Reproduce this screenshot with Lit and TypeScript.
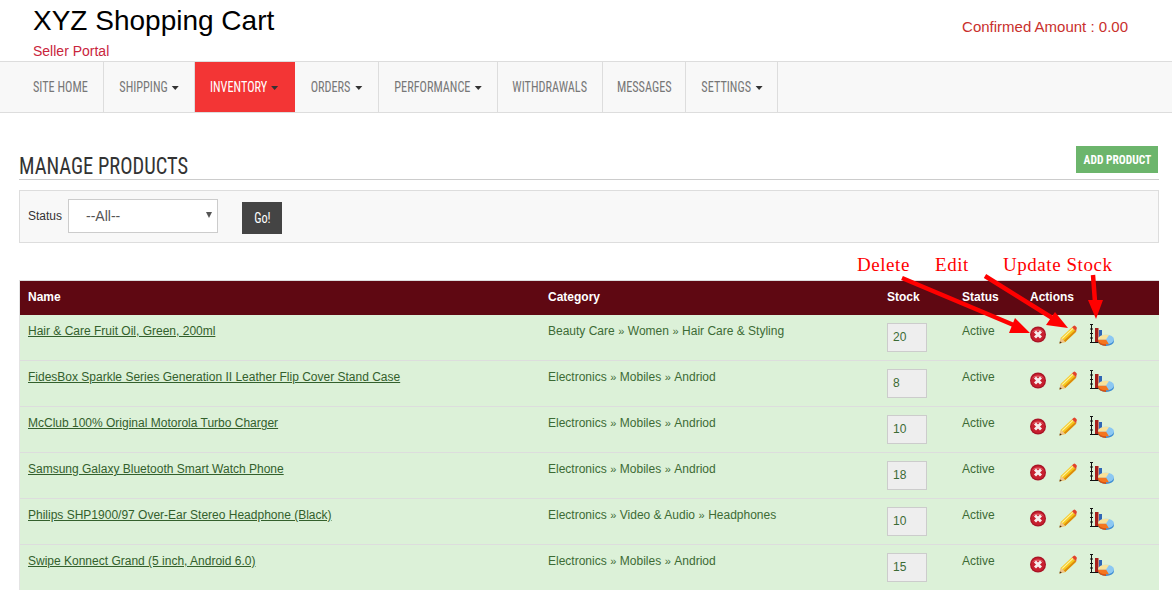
import { LitElement, html, css, svg } from "lit";
import { customElement } from "lit/decorators.js";

const NAV = [
  { t: "SITE HOME", w: 104 }, { t: "SHIPPING", c: 1, w: 91 }, { t: "INVENTORY", c: 1, w: 100, a: 1 },
  { t: "ORDERS", c: 1, w: 84 }, { t: "PERFORMANCE", c: 1, w: 119 }, { t: "WITHDRAWALS", w: 105 },
  { t: "MESSAGES", w: 83 }, { t: "SETTINGS", c: 1, w: 92 },
];
const ROWS = [
  ["Hair & Care Fruit Oil, Green, 200ml", ["Beauty Care", "Women", "Hair Care & Styling"], "20"],
  ["FidesBox Sparkle Series Generation II Leather Flip Cover Stand Case", ["Electronics", "Mobiles", "Andriod"], "8"],
  ["McClub 100% Original Motorola Turbo Charger", ["Electronics", "Mobiles", "Andriod"], "10"],
  ["Samsung Galaxy Bluetooth Smart Watch Phone", ["Electronics", "Mobiles", "Andriod"], "18"],
  ["Philips SHP1900/97 Over-Ear Stereo Headphone (Black)", ["Electronics", "Video & Audio", "Headphones"], "10"],
  ["Swipe Konnect Grand (5 inch, Android 6.0)", ["Electronics", "Mobiles", "Andriod"], "15"],
] as const;

const delIcon = html`<svg class="i-del" width="18" height="18" viewBox="0 0 18 18">
  <circle cx="9" cy="9.500" r="8" fill="#a81426"/><circle cx="9" cy="9.500" r="6.800" fill="#c8202f"/>
  <path d="M3 7.500a6.500 5 0 0 1 12 0a6.500 3 0 0 0-12 0z" fill="#e4626c"/>
  <path d="M6 6.500l6 6M12 6.500l-6 6" stroke="#f6eeee" stroke-width="2.900"/></svg>`;
const editIcon = html`<svg class="i-edit" width="20" height="20" viewBox="0 0 20 20">
  <path d="M1.500 18.500l1.400-5.800L14 2.200l4.200 4.200L7.200 17z" fill="#f7c81e"/>
  <path d="M4.200 13.600L15 3.400" stroke="#fff2a0" stroke-width="1.300"/>
  <path d="M6.400 16.500L17.500 6" stroke="#dc8c0c" stroke-width="1.800"/>
  <path d="M14 2.200l1.500-1.300q1-.7 1.800 0l1.300 1.300q.7 1-.1 1.900L18.200 6.400z" fill="#e2432a"/>
  <path d="M2.900 12.700L1.500 18.500l5.700-1.500z" fill="#eec48e"/><path d="M1.900 16.200L1.500 18.500l2.400-.7z" fill="#4e2c12"/></svg>`;
const chartIcon = html`<svg class="i-chart" width="26" height="23" viewBox="0 0 26 23">
  <path d="M1.500 0v18.500M0 18.500h12M0 .5h3M0 5h3M0 9.500h3M0 14h3" stroke="#111" stroke-width="1" fill="none"/>
  <rect x="5" y="4" width="3.500" height="14" fill="#a8201c"/>
  <rect x="9" y="6" width="3" height="7" fill="#2f66b5"/>
  <ellipse cx="16" cy="17" rx="8" ry="5" fill="#3a8ad2"/>
  <ellipse cx="16" cy="15.500" rx="8" ry="4.800" fill="#8cc8f2"/>
  <path d="M8 15.500v1.500a8 5 0 0 0 8 5v-1.700z" fill="#d9520f"/>
  <path d="M16 15.500H8a8 4.800 0 0 0 8 4.800l3-.1z" fill="#f4761f"/>
  <path d="M16 15.500H8a8 4.800 0 0 1 8-4.800l3 .3z" fill="#f9e29a"/></svg>`;

@customElement("app-root")
export class AppRoot extends LitElement {
  static styles = css`
    :host { display: block; height: 590px; overflow: hidden; position: relative; background: #fff;
      font-family: "Liberation Sans", Arial, sans-serif; color: #333; }
    .top { height: 61px; box-sizing: border-box; padding: 0 44px 0 33px; display: flex; justify-content: space-between; }
    .brand h1 { margin: 0; padding-top: 3px; font-size: 28px; line-height: 35px; font-weight: 400; color: #000; }
    .brand p { margin: 0; padding-top: 5px; font-size: 14px; line-height: 17px; color: #c9253c; }
    .amount { padding-top: 18px; font-size: 15px; line-height: 18px; color: #c9302c; }
    nav { display: flex; height: 52px; box-sizing: border-box; background: #f8f8f8;
      border-top: 1px solid #ddd; border-bottom: 1px solid #ddd; }
    .nv { display: flex; align-items: center; justify-content: center; box-sizing: border-box; border-right: 1px solid #ddd;
      font-family: "Liberation Sans Narrow", "Roboto Condensed", "Liberation Sans", sans-serif; font-size: 14px; color: #777; }
    .lbl { display: inline-flex; align-items: center; flex: none; transform: scaleX(.875); }
    .nv.first { justify-content: flex-start; padding-left: 33px; }
    .nv.first .lbl { transform-origin: left center; }
    .nv.active { background: #f33535; color: #fff; border-right-color: #f33535; }
    .caret { display: inline-block; width: 0; height: 0; margin: 2px 0 0 5px; border-top: 4px solid #333;
      border-left: 4.500px solid transparent; border-right: 4.500px solid transparent; }
    main { padding: 33px 13px 0 19px; }
    .head { display: flex; justify-content: space-between; align-items: flex-start; height: 34px; width: 1140px; box-sizing: border-box;
      border-bottom: 1px solid #ccc; }
    .head h2 { margin: 0; padding-top: 7px; font-family: "Liberation Sans Narrow", "Roboto Condensed", "Liberation Sans", sans-serif;
      font-size: 24px; line-height: 27px; font-weight: 400; color: #333; transform: scaleX(.853); transform-origin: left center; }
    .add { width: 82px; height: 27px; margin-right: 1px; border: 0; padding: 0; background: #6cb56c; color: #fff;
      font-family: "Liberation Sans Narrow", "Roboto Condensed", "Liberation Sans", sans-serif; font-size: 13px; font-weight: 700; }
    .add span, .go span { display: inline-block; white-space: nowrap; transform: scaleX(.88); }
    .filter { display: flex; align-items: center; margin-top: 10px; height: 53px; box-sizing: border-box;
      width: 1140px; background: #f8f8f8; border: 1px solid #ddd; padding: 0 0 2px 8px; }
    .filter label { font-size: 12px; width: 40px; color: #333; }
    .sel { position: relative; width: 150px; height: 34px; box-sizing: border-box; border: 1px solid #ccc; background: #fff;
      font-size: 14px; line-height: 32px; padding-left: 17px; color: #555; }
    .sel::after { content: ""; position: absolute; right: 5px; top: 12px; border-top: 6px solid #555;
      border-left: 3px solid transparent; border-right: 3px solid transparent; }
    .go { margin: 4px 0 0 24px; width: 40px; height: 32px; border: 0; padding: 0; background: #444; color: #fff;
      font-family: "Liberation Sans Narrow", "Roboto Condensed", "Liberation Sans", sans-serif; font-size: 14px; }
    table { margin-top: 37px; width: 1140px; table-layout: fixed; border-collapse: separate; border-spacing: 0; font-size: 12px;
      border-top: 1px solid #ddd; border-left: 1px solid #e4e4e4; box-sizing: border-box; }
    th { height: 34px; padding: 0 8px 2px; box-sizing: border-box; background: #5f0812; color: #fff; text-align: left; font-weight: 700; }
    td { height: 46px; padding: 8px; box-sizing: border-box; background: #dcf1d8; color: #3c6b35; vertical-align: top; line-height: 16px;
      border-bottom: 1px solid #ddd; }
    td a { color: #33602c; text-decoration: underline; }
    .sep { font-size: 11px; margin: 0 3.500px; }
    .stock { width: 40px; height: 29px; box-sizing: border-box; border: 1px solid #ccc; background: #eee; padding: 0 5px;
      line-height: 27px; color: #3c6b35; }
    .acts { display: flex; align-items: flex-start; padding-top: 1px; height: 26px; }
    .i-del { margin: 1px 0 0 -1px; flex: none; }
    .i-edit { margin: 1px 0 0 11px; flex: none; }
    .i-chart { margin-left: 12px; flex: none; }
    .notes { position: absolute; left: 0; top: 0; pointer-events: none; }
    .notes text { font-family: "Liberation Serif", serif; font-size: 19px; fill: #f00; letter-spacing: .55px; }
  `;

  render() {
    return html`
      <header class="top">
        <div class="brand"><h1>XYZ Shopping Cart</h1><p>Seller Portal</p></div>
        <div class="amount">Confirmed Amount : 0.00</div>
      </header>
      <nav>
        ${NAV.map((n: any, i) => html`<div class="nv ${i === 0 ? "first" : ""} ${n.a ? "active" : ""}" style="width:${n.w}px"><span class="lbl">${n.t}${n.c ? html`<span class="caret"></span>` : ""}</span></div>`)}
      </nav>
      <main>
        <div class="head"><h2>MANAGE PRODUCTS</h2><button class="add"><span>ADD PRODUCT</span></button></div>
        <div class="filter"><label>Status</label><div class="sel">--All--</div><button class="go"><span>Go!</span></button></div>
        <table>
          <colgroup><col style="width:520px"><col style="width:339px"><col style="width:75px"><col style="width:68px"><col style="width:137px"></colgroup>
          <thead><tr><th>Name</th><th>Category</th><th>Stock</th><th>Status</th><th>Actions</th></tr></thead>
          <tbody>
            ${ROWS.map(r => html`<tr>
              <td><a href="#">${r[0]}</a></td>
              <td>${r[1].map((c, i) => html`${i ? html`<span class="sep">»</span>` : ""}${c}`)}</td>
              <td><div class="stock">${r[2]}</div></td>
              <td>Active</td>
              <td><div class="acts">${delIcon}${editIcon}${chartIcon}</div></td>
            </tr>`)}
          </tbody>
        </table>
      </main>
      <svg class="notes" width="1172" height="590" viewBox="0 0 1172 590">
        <text x="857" y="271">Delete</text>
        <text x="935" y="271">Edit</text>
        <text x="1003" y="271">Update Stock</text>
        ${svg`<path d="M902 278L1016 326M985 276L1054 319M1093 275L1095 302" stroke="#f00" stroke-width="4.500" fill="none"/>
        <path d="M1030 333L1009 333L1015 318zM1068 328L1046 325L1055 312zM1096 319L1088 300L1103 300z" fill="#f00"/>`}
      </svg>
    `;
  }
}
